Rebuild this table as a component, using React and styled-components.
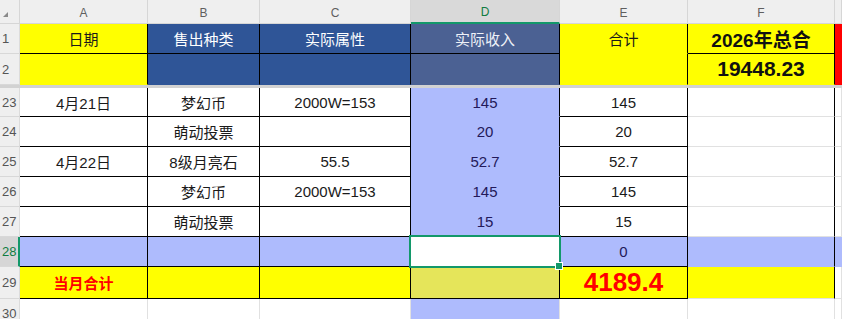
import React from "react";
import styled, { createGlobalStyle } from "styled-components";

const Global = createGlobalStyle`
  html, body { margin: 0; padding: 0; background: #fff; overflow: hidden; }
  * { box-sizing: border-box; }
`;

const YEL = "#ffff00";
const BLUE = "#2f5597";
const DHEAD = "#4b6193";
const PERI = "#aebbfd";
const BLK = "#000";
const GRID = "#e1e1e1";
const GREEN = "#13986a";

const Sheet = styled.div`
  display: grid;
  grid-template-columns: 20px 128px 112px 151px 149px 128px 147px 1fr;
  grid-template-rows: 24px 30px 31px 3px 29px 30px 30px 30px 30px 30px 32px 30px;
  width: 842px;
  height: 319px;
  overflow: hidden;
  font-family: "Liberation Sans", "Noto Sans CJK SC", sans-serif;
`;

const ColHead = styled.div`
  display: flex;
  align-items: center;
  justify-content: center;
  background: ${(p) => (p.$sel ? "#d9d9d9" : "#efefef")};
  color: ${(p) => (p.$sel ? "#107c41" : "#5f5f5f")};
  font-size: 12px;
  border-right: 1px solid #d6d6d6;
  border-bottom: ${(p) => (p.$sel ? `2px solid ${GREEN}` : "1px solid #d6d6d6")};
  padding-top: 2px;
`;

const Corner = styled.div`
  position: relative;
  background: #efefef;
  border-right: 1px solid #d6d6d6;
  border-bottom: 1px solid #d6d6d6;
  &::after {
    content: "";
    position: absolute;
    left: 3px;
    top: 12px;
    width: 0;
    height: 0;
    border-left: 5px solid transparent;
    border-bottom: 5px solid #8a8a8a;
  }
`;

const RowHead = styled.div`
  display: flex;
  align-items: center;
  padding-left: 2px;
  background: ${(p) => (p.$sel ? "#d6d6d6" : "#efefef")};
  color: ${(p) => (p.$sel ? "#107c41" : "#555")};
  font-size: 13px;
  border-bottom: 1px solid #d8d8d8;
  border-right: ${(p) => (p.$sel ? `2px solid ${GREEN}` : "1px solid #dcdcdc")};
`;

const Freeze = styled.div`
  grid-column: 1 / -1;
  background: #d2d2d2;
`;

const Cell = styled.div`
  position: relative;
  display: flex;
  align-items: center;
  justify-content: center;
  white-space: nowrap;
  overflow: hidden;
  background: ${(p) => p.$bg || "#fff"};
  color: ${(p) => p.$fg || "#1a1a1a"};
  font-size: ${(p) => p.$fs || 15}px;
  font-weight: ${(p) => (p.$bold ? 700 : 400)};
  border-right: 1px solid ${(p) => p.$br || BLK};
  border-bottom: 1px solid ${(p) => p.$bb || BLK};
  overflow: visible;
`;

const Selection = styled.div`
  position: absolute;
  left: -2px;
  top: -2px;
  right: -2px;
  bottom: -2px;
  border: 2px solid ${GREEN};
  pointer-events: none;
  z-index: 2;
  &::after {
    content: "";
    position: absolute;
    right: -4px;
    bottom: -4px;
    width: 6px;
    height: 6px;
    background: ${GREEN};
    border: 1px solid #fff;
  }
`;

const cols = ["A", "B", "C", "D", "E", "F", ""];

const dataRows = [
  { n: 23, a: "4月21日", b: "梦幻币", c: "2000W=153", d: "145", e: "145" },
  { n: 24, a: "", b: "萌动投票", c: "", d: "20", e: "20" },
  { n: 25, a: "4月22日", b: "8级月亮石", c: "55.5", d: "52.7", e: "52.7" },
  { n: 26, a: "", b: "梦幻币", c: "2000W=153", d: "145", e: "145" },
  { n: 27, a: "", b: "萌动投票", c: "", d: "15", e: "15", last: true },
];

export default function App() {
  return (
    <>
      <Global />
      <Sheet>
        <Corner />
        {cols.map((c, i) => (
          <ColHead key={i} $sel={c === "D"}>
            {c}
          </ColHead>
        ))}

        <RowHead>1</RowHead>
        <Cell $bg={YEL}>日期</Cell>
        <Cell $bg={BLUE} $fg="#fff">售出种类</Cell>
        <Cell $bg={BLUE} $fg="#fff">实际属性</Cell>
        <Cell $bg={DHEAD} $fg="#eef1f8">实际收入</Cell>
        <Cell $bg={YEL} $bb={YEL}>合计</Cell>
        <Cell $bg={YEL} $bold $fs={19} $fg="#111">2026年总合</Cell>
        <Cell $bg="#ff0000" $br="#ff0000" $bb="#ff0000" />

        <RowHead>2</RowHead>
        <Cell $bg={YEL} $bb={YEL} />
        <Cell $bg={BLUE} $bb={BLUE} />
        <Cell $bg={BLUE} $bb={BLUE} />
        <Cell $bg={DHEAD} $bb={DHEAD} />
        <Cell $bg={YEL} $bb={YEL} />
        <Cell $bg={YEL} $bb={YEL} $bold $fs={21} $fg="#111">19448.23</Cell>
        <Cell $bg="#ff0000" $br="#ff0000" $bb="#ff0000" />

        <Freeze />

        {dataRows.map((r) => (
          <React.Fragment key={r.n}>
            <RowHead>{r.n}</RowHead>
            <Cell>{r.a}</Cell>
            <Cell>{r.b}</Cell>
            <Cell>{r.c}</Cell>
            <Cell $bg={PERI} $bb={r.last ? BLK : PERI} $fg="#23195a">{r.d}</Cell>
            <Cell>{r.e}</Cell>
            <Cell $bb={GRID} />
            <Cell $bb={GRID} $br={GRID} />
          </React.Fragment>
        ))}

        <RowHead $sel>28</RowHead>
        <Cell $bg={PERI} />
        <Cell $bg={PERI} />
        <Cell $bg={PERI} />
        <Cell $bg="#fff">
          <Selection />
        </Cell>
        <Cell $bg={PERI} $fg="#23195a">0</Cell>
        <Cell $bg={PERI} $bb={PERI} />
        <Cell $bg={PERI} $bb={PERI} $br={PERI} />

        <RowHead>29</RowHead>
        <Cell $bg={YEL} $fg="#ff0000" $bold>当月合计</Cell>
        <Cell $bg={YEL} />
        <Cell $bg={YEL} />
        <Cell $bg="#e5e55a" />
        <Cell $bg={YEL} $fg="#ff0000" $bold $fs={26}>4189.4</Cell>
        <Cell $bg={YEL} $bb={GRID} />
        <Cell $bb={GRID} $br={GRID} />

        <RowHead>30</RowHead>
        <Cell $br={GRID} $bb={GRID} />
        <Cell $br={GRID} $bb={GRID} />
        <Cell $br={GRID} $bb={GRID} />
        <Cell $bg={PERI} $br={GRID} $bb={GRID} />
        <Cell $br={GRID} $bb={GRID} />
        <Cell $br={GRID} $bb={GRID} />
        <Cell $br={GRID} $bb={GRID} />
      </Sheet>
    </>
  );
}
